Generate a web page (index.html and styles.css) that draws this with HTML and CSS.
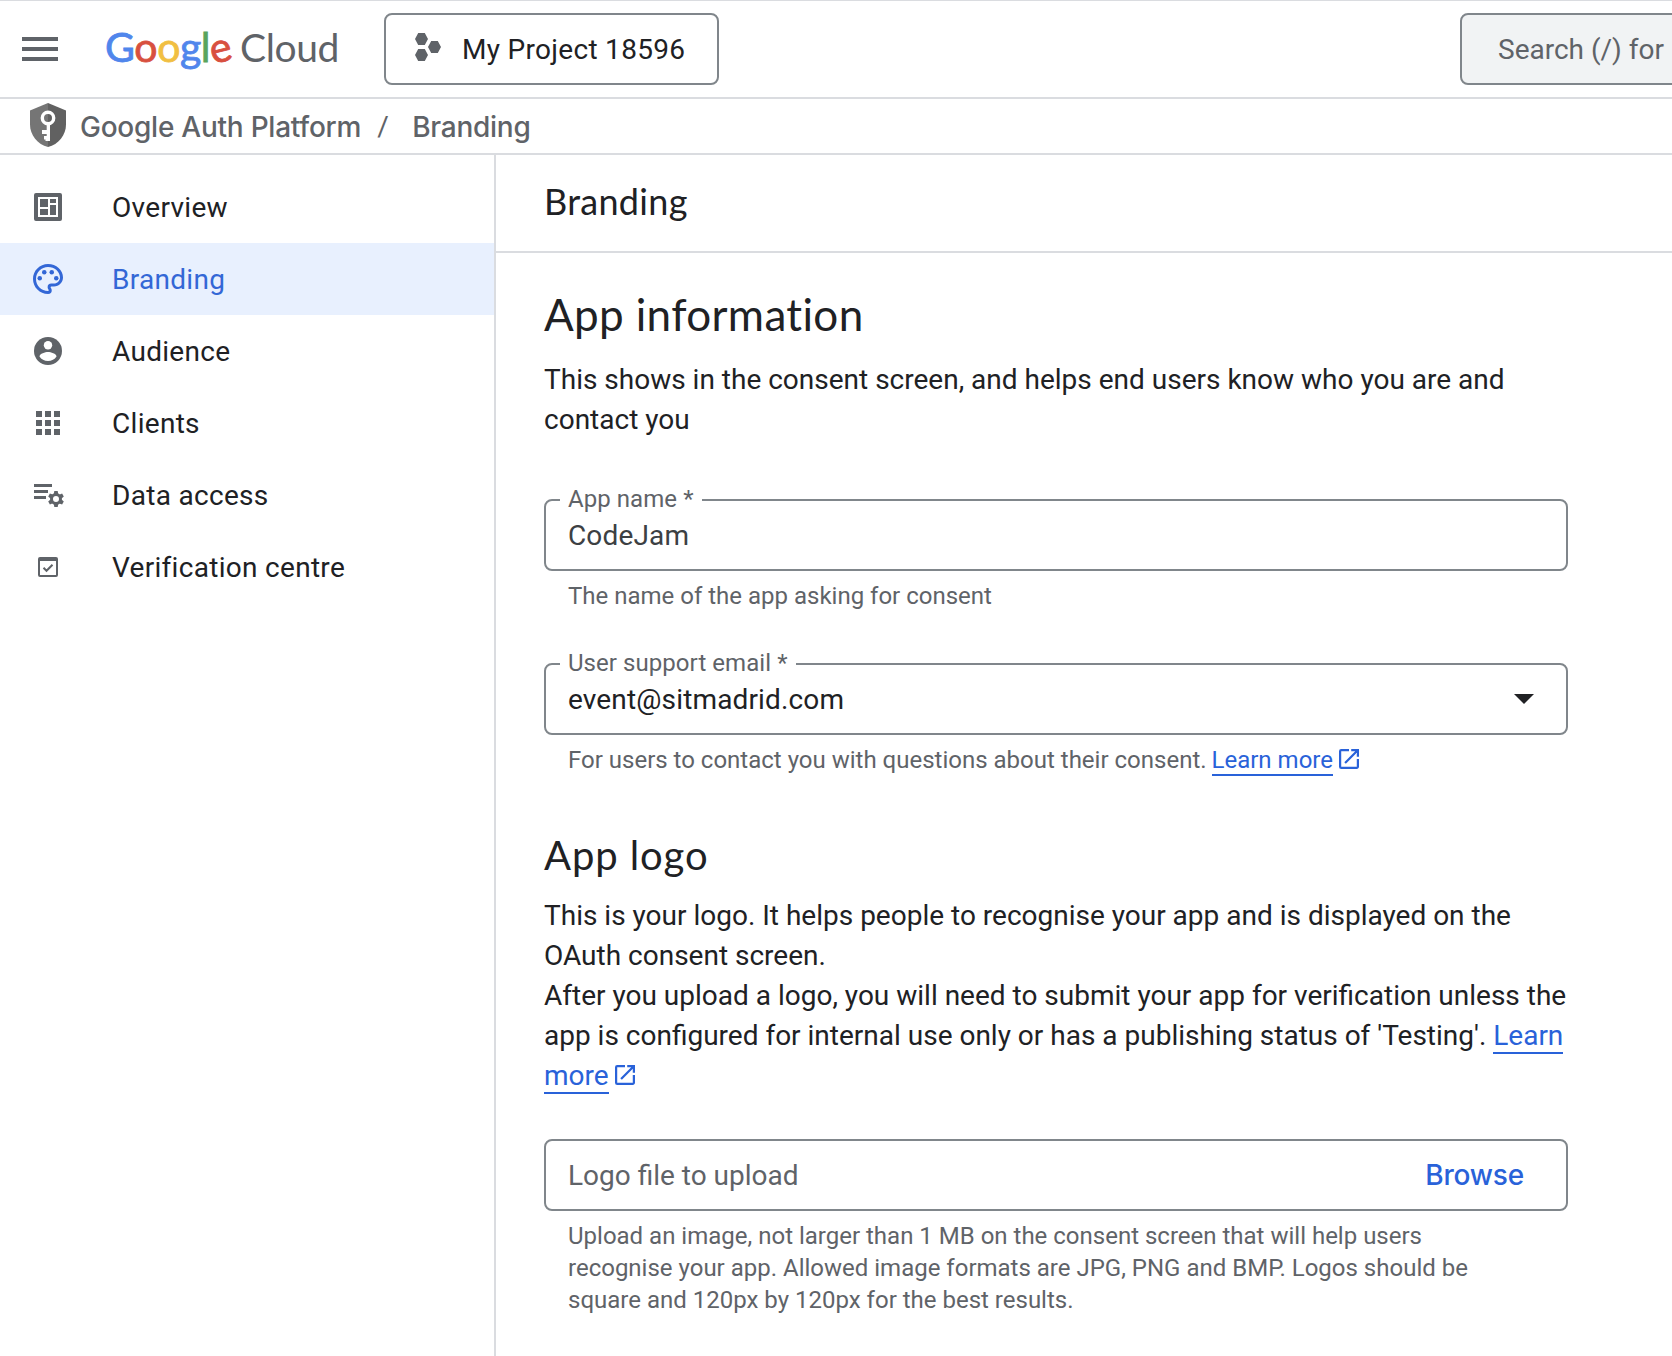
FILE: index.html
```html
<!DOCTYPE html>
<html lang="en-GB">
<head>
<meta charset="utf-8">
<title>Branding – Google Auth Platform</title>
<link rel="stylesheet" href="styles.css">
</head>
<body>
<header class="topbar">
  <svg class="menu" width="36" height="24" viewBox="0 0 36 24"><path d="M0 0h36v4H0zM0 10h36v4H0zM0 20h36v4H0z"/></svg>
  <div class="logo"><span class="logo-google"><span class="c-blue">G</span><span class="c-red">o</span><span class="c-yellow">o</span><span class="c-blue">g</span><span class="c-green">l</span><span class="c-red tilt">e</span></span><span class="logo-cloud">Cloud</span></div>
  <div class="project">
    <svg width="26" height="28" viewBox="0 0 26 28"><path d="M3.200 0h6.600L13 6l-3.200 6H3.200L0 6zM16.200 8h6.600L26 14l-3.200 6h-6.600L13 14zM3.200 16h6.600l3.200 6-3.200 6H3.200L0 22z"/></svg>
    <span>My Project 18596</span>
  </div>
  <div class="search">Search (/) for</div>
</header>
<nav class="crumbs">
  <svg width="36" height="44" viewBox="0 0 36 44">
    <path fill="#757575" d="M18 0 0 7.500v14C0 32 7.500 41.500 18 44z"/>
    <path fill="#616161" d="M18 0l18 7.500v14C36 32 28.500 41.500 18 44z"/>
    <circle cx="18" cy="15" r="5.700" fill="none" stroke="#fff" stroke-width="3.400"/>
    <path fill="#fff" d="M16.700 21.500h3.300V38h-4.500v-1.500H14V33h2.700v-2H12v-4h4.700z"/>
  </svg>
  <span class="crumb">Google Auth Platform</span>
  <span class="slash">/</span>
  <span class="crumb">Branding</span>
</nav>
<div class="shell">
  <aside class="side">
    <a class="item"><svg width="36" height="36" viewBox="0 0 36 36"><path fill-rule="evenodd" d="M6 4h24a2 2 0 0 1 2 2v24a2 2 0 0 1-2 2H6a2 2 0 0 1-2-2V6a2 2 0 0 1 2-2zm2 4v20h20V8zM10 10h8v8h-8zM20 10h6v4h-6zM10 20h8v6h-8zM20 16h6v10h-6z"/></svg><span>Overview</span></a>
    <a class="item active"><svg width="36" height="36" viewBox="0 0 24 24"><path d="M12 22C6.490 22 2 17.510 2 12S6.490 2 12 2s10 4.040 10 9c0 3.310-2.690 6-6 6h-1.770c-.28 0-.5.22-.5.5 0 .12.05.23.13.33.41.47.64 1.060.64 1.670A2.500 2.500 0 0 1 12 22zm0-18c-4.410 0-8 3.590-8 8s3.590 8 8 8c.28 0 .5-.22.5-.5a.54.54 0 0 0-.14-.35c-.41-.46-.63-1.050-.63-1.650a2.500 2.500 0 0 1 2.500-2.500H16c2.210 0 4-1.790 4-4 0-3.860-3.590-7-8-7z"/><circle cx="6.500" cy="11.500" r="1.500"/><circle cx="9.500" cy="7.500" r="1.500"/><circle cx="14.500" cy="7.500" r="1.500"/><circle cx="17.500" cy="11.500" r="1.500"/></svg><span>Branding</span></a>
    <a class="item"><svg width="36" height="36" viewBox="0 0 36 36"><circle cx="18" cy="18" r="14"/><circle class="cut" cx="18" cy="12.300" r="4.200"/><path class="cut" d="M9.500 23.500c.1-3 5.700-4.500 8.500-4.500s8.400 1.500 8.500 4.500c-1.800 2.800-4.900 4.500-8.500 4.500s-6.700-1.700-8.500-4.500z"/></svg><span>Audience</span></a>
    <a class="item"><svg width="36" height="36" viewBox="0 0 36 36"><path d="M6 6h6v6H6zM15 6h6v6h-6zM24 6h6v6h-6zM6 15h6v6H6zM15 15h6v6h-6zM24 15h6v6h-6zM6 24h6v6H6zM15 24h6v6h-6zM24 24h6v6h-6z"/></svg><span>Clients</span></a>
    <a class="item"><svg width="36" height="36" viewBox="0 0 36 36"><path d="M4 7h18v3H4zM4 13h14v3H4zM4 19h12v3H4z"/><circle cx="26" cy="22" r="4.500" fill="none" stroke="currentColor" stroke-width="3"/><path d="M24.300 14h3.400l.5 3h-4.400zM24.300 30h3.400l.5-3h-4.400zM32.100 16.500l1.700 3-2.300 2-2.200-3.800zM19.900 27.500l-1.700-3 2.300-2 2.200 3.800zM33.800 24.500l-1.700 3-2.800-1 2.200-3.900zM18.200 19.500l1.700-3 2.800 1.100-2.200 3.900z"/></svg><span>Data access</span></a>
    <a class="item"><svg width="36" height="36" viewBox="0 0 36 36"><path fill-rule="evenodd" d="M10 8h16a2 2 0 0 1 2 2v16a2 2 0 0 1-2 2H10a2 2 0 0 1-2-2V10a2 2 0 0 1 2-2zm0 4v14h16V12z"/><path d="M13.500 18.800l3 3 6-6" fill="none" stroke="currentColor" stroke-width="2"/></svg><span>Verification centre</span></a>
  </aside>
  <main class="main">
    <div class="titlebar"><h1>Branding</h1></div>
    <div class="content">
      <h2>App information</h2>
      <p>This shows in the consent screen, and helps end users know who you are and contact you</p>
      <div class="field field-name"><span class="label">App name *</span><span class="value soft">CodeJam</span></div>
      <div class="hint">The name of the app asking for consent</div>
      <div class="field field-email"><span class="label">User support email *</span><span class="value">event@sitmadrid.com</span><svg class="arrow" width="20" height="10" viewBox="0 0 20 10"><path d="M0 0h20L10 10z"/></svg></div>
      <div class="hint">For users to contact you with questions about their consent. <a class="link">Learn more</a><svg class="ext" viewBox="3 3 18 18"><path d="M19 19H5V5h7V3H5a2 2 0 0 0-2 2v14a2 2 0 0 0 2 2h14c1.100 0 2-.9 2-2v-7h-2v7zM14 3v2h3.590l-9.830 9.830 1.410 1.410L19 6.410V10h2V3h-7z"/></svg></div>
      <h3>App logo</h3>
      <p>This is your logo. It helps people to recognise your app and is displayed on the OAuth consent screen.<br>After you upload a logo, you will need to submit your app for verification unless the app is configured for internal use only or has a publishing status of 'Testing'. <a class="link">Learn more</a><svg class="ext" viewBox="3 3 18 18"><path d="M19 19H5V5h7V3H5a2 2 0 0 0-2 2v14a2 2 0 0 0 2 2h14c1.100 0 2-.9 2-2v-7h-2v7zM14 3v2h3.590l-9.830 9.830 1.410 1.410L19 6.410V10h2V3h-7z"/></svg></p>
      <div class="field field-file"><span class="value grey">Logo file to upload</span><span class="browse">Browse</span></div>
      <div class="hint">Upload an image, not larger than 1 MB on the consent screen that will help users recognise your app. Allowed image formats are JPG, PNG and BMP. Logos should be square and 120px by 120px for the best results.</div>
    </div>
  </main>
</div>
</body>
</html>
```
FILE: styles.css
```css
* { box-sizing: border-box; }
body {
  margin: 0;
  height: 1356px;
  overflow: hidden;
  display: flex;
  flex-direction: column;
  background: #fff;
  color: #202124;
  font: 28px/40px Roboto, sans-serif;
}
svg { display: block; flex: none; fill: currentColor; }
h1, h2, h3, p { margin: 0; }

.topbar {
  flex: none;
  height: 99px;
  display: flex;
  align-items: center;
  border-top: 1px solid #dadce0;
  border-bottom: 2px solid #dadce0;
  padding-left: 22px;
  color: #5f6368;
  white-space: nowrap;
}
.logo {
  width: 279px;
  margin-left: 47px;
  padding-bottom: 5px;
  display: flex;
  align-items: baseline;
  font-family: Lato, sans-serif;
}
.logo-google { width: 135px; font-size: 41px; letter-spacing: -.4px; -webkit-text-stroke: .8px currentColor; }
.logo-cloud { font-size: 39px; letter-spacing: -.4px; }
.tilt { display: inline-block; transform: rotate(-14deg); transform-origin: 50% 60%; }
.c-blue { color: #5086ec; -webkit-text-stroke-color: #5086ec; }
.c-red { color: #d8503f; -webkit-text-stroke-color: #d8503f; }
.c-yellow { color: #f1bf42; -webkit-text-stroke-color: #f1bf42; }
.c-green { color: #58a55c; -webkit-text-stroke-color: #58a55c; }
.project {
  width: 335px;
  height: 72px;
  display: flex;
  align-items: center;
  gap: 21px;
  padding-left: 29px;
  border: 2px solid #80868b;
  border-radius: 8px;
  letter-spacing: .3px;
}
.project svg { margin-bottom: 4px; }
.project span { color: #202124; padding-top: 2px; }
.search {
  flex: none;
  width: 260px;
  height: 72px;
  margin-left: auto;
  margin-right: -48px;
  padding: 15px 0 0 36px;
  border: 2px solid #80868b;
  border-radius: 8px;
  background: #f1f3f4;
}

.crumbs {
  flex: none;
  height: 56px;
  display: flex;
  align-items: center;
  padding-left: 30px;
  border-bottom: 2px solid #dadce0;
  color: #5f6368;
}
.crumb { padding-top: 2px; font: 500 28px/40px Inter, sans-serif; letter-spacing: -.25px; }
.crumbs svg { margin: 0 14px 3px 0; }
.slash { width: 35px; margin-left: 16px; padding-top: 2px; }

.shell { flex: 1; display: flex; min-height: 0; }
.side { width: 496px; padding-top: 16px; border-right: 2px solid #dadce0; letter-spacing: .3px; }
.item { height: 72px; display: flex; align-items: center; gap: 46px; padding-left: 30px; }
.item span { padding-top: 2px; }
.item svg { color: #5f6368; }
.item .cut { fill: #fff; }
.active, .active svg { color: #3367d6; }
.active { background: #e8f0fe; }

.main { flex: 1; }
.titlebar {
  height: 98px;
  display: flex;
  align-items: center;
  padding: 0 0 4px 48px;
  border-bottom: 2px solid #dadce0;
}
h1, h2, h3 { font-family: Lato, sans-serif; font-weight: 400; line-height: 48px; }
h1 { font-size: 36px; letter-spacing: .3px; }
h2 { font-size: 44px; letter-spacing: .35px; }
h3 { font-size: 40px; letter-spacing: .9px; margin: 55px 0 17px; }
.content { width: 1072px; padding: 37px 0 0 48px; }
h2 + p { margin: 22px 0 59px; }

.field {
  position: relative;
  height: 72px;
  display: flex;
  justify-content: space-between;
  padding: 15px 32px 0 22px;
  border: 2px solid #80868b;
  border-radius: 8px;
}
.label {
  position: absolute;
  top: -18px;
  left: 14px;
  padding: 0 8px;
  background: #fff;
  color: #5f6368;
  font-size: 24px;
  line-height: 32px;
  letter-spacing: .06px;
}
.value { letter-spacing: .15px; }
.soft { color: #3c4043; }
.grey { color: #5f6368; letter-spacing: 0; }
.field-email { margin-top: 51px; }
.field-file { margin-top: 43px; padding-right: 42px; }
.arrow { margin-top: 14px; }
.browse { font: 500 28px/38px Inter, sans-serif; letter-spacing: -.2px; color: #2962d9; }
.hint { margin-top: 9px; padding: 0 40px 0 24px; color: #5f6368; font-size: 24px; line-height: 32px; }
.link { margin-left: -1px; color: #2962d9; border-bottom: 2px solid #2962d9; }
p .link { margin-left: 0; }
.ext { display: inline-block; width: 20px; height: 20px; margin-left: 6px; color: #2962d9; vertical-align: 0; }
.hint .ext { vertical-align: -1px; }
```
